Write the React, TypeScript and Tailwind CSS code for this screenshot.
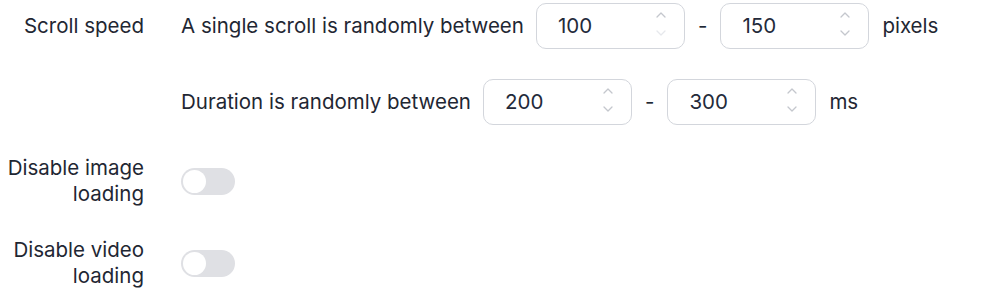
import { useState } from "react"

/* ===================== PAGE ===================== */

export default function App() {
    const [imgOff, setImgOff] = useState(false)
    const [videoOff, setVideoOff] = useState(false)

    return (
        <div
            className="w-[1000px] h-[308px] bg-white text-[20.5px] text-[#1f2733] pt-[3px]"
            style={{ fontFamily: "Inter, 'Noto Sans', sans-serif" }}
        >
            <div className="flex flex-col gap-[30px]">
                {/* SCROLL SPEED */}
                <Row label="Scroll speed" alignTop>
                    <div className="flex flex-col gap-[30px]">
                        <div className="flex items-center">
                            <span>A single scroll is randomly between</span>
                            <NumberBox value={100} className="ml-[12px]" minReached />
                            <span className="mx-[13px]">-</span>
                            <NumberBox value={150} />
                            <span className="ml-[13px]">pixels</span>
                        </div>
                        <div className="flex items-center">
                            <span>Duration is randomly between</span>
                            <NumberBox value={200} className="ml-[12px]" />
                            <span className="mx-[13px]">-</span>
                            <NumberBox value={300} />
                            <span className="ml-[13px]">ms</span>
                        </div>
                    </div>
                </Row>

                {/* TOGGLES */}
                <Row label="Disable image loading">
                    <Toggle on={imgOff} onClick={() => setImgOff(!imgOff)} />
                </Row>
                <Row label="Disable video loading">
                    <Toggle on={videoOff} onClick={() => setVideoOff(!videoOff)} />
                </Row>
            </div>
        </div>
    )
}

/* ===================== COMPONENTS ===================== */

function Row({ label, children, alignTop }: any) {
    return (
        <div className={`flex ${alignTop ? "items-start" : "items-center"}`}>
            <div
                className={`w-[144px] shrink-0 text-right leading-[26px] ${alignTop ? "pt-[10px]" : ""}`}
            >
                {label}
            </div>
            <div className="ml-[37px]">{children}</div>
        </div>
    )
}

function NumberBox({ value, className = "", minReached }: any) {
    return (
        <div
            className={`relative w-[149px] h-[46px] rounded-[10px] border border-[#d3d6dc] flex items-center pl-[21px] ${className}`}
        >
            <span className="text-[#232a3a]">{value}</span>
            <div className="absolute right-[18px] top-0 h-full flex flex-col justify-center gap-[12px] pb-[5px]">
                <svg width="10" height="6" viewBox="0 0 10 6" fill="none">
                    <path d="M1 5L5 1L9 5" stroke="#c4c7cd" strokeWidth="1.3" strokeLinecap="round" strokeLinejoin="round" />
                </svg>
                <svg width="10" height="6" viewBox="0 0 10 6" fill="none">
                    <path
                        d="M1 1L5 5L9 1"
                        stroke={minReached ? "#e6e8ec" : "#c4c7cd"}
                        strokeWidth="1.3"
                        strokeLinecap="round"
                        strokeLinejoin="round"
                    />
                </svg>
            </div>
        </div>
    )
}

function Toggle({ on, onClick }: any) {
    return (
        <button
            onClick={onClick}
            className={`w-[54px] h-[27px] rounded-full p-[2px] flex items-center transition ${on ? "bg-[#3b82f6] justify-end" : "bg-[#dfe0e4] justify-start"}`}
        >
            <span className="w-[23px] h-[23px] rounded-full bg-white block" />
        </button>
    )
}
